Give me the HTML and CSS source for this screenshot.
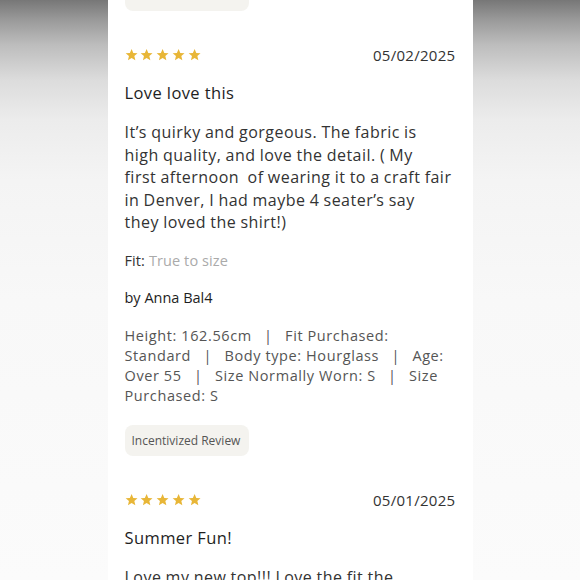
FILE: index.html
```html
<!DOCTYPE html>
<html lang="en">
<head>
<meta charset="utf-8">
<link rel="stylesheet" href="styles.css">
</head>
<body>
<main class="card">
  <div class="tag">Incentivized Review</div>

  <article class="review">
    <div class="review-head">
      <div class="stars" aria-label="5 stars">
        <svg viewBox="0 0 24 24"><path d="M12 1.8l3.1 7.1 7.7.7-5.8 5.1 1.8 7.5L12 18.3l-6.6 3.9 1.8-7.5L1.2 9.6l7.7-.7z"/></svg>
        <svg viewBox="0 0 24 24"><path d="M12 1.8l3.1 7.1 7.7.7-5.8 5.1 1.8 7.5L12 18.3l-6.6 3.9 1.8-7.5L1.2 9.6l7.7-.7z"/></svg>
        <svg viewBox="0 0 24 24"><path d="M12 1.8l3.1 7.1 7.7.7-5.8 5.1 1.8 7.5L12 18.3l-6.6 3.9 1.8-7.5L1.2 9.6l7.7-.7z"/></svg>
        <svg viewBox="0 0 24 24"><path d="M12 1.8l3.1 7.1 7.7.7-5.8 5.1 1.8 7.5L12 18.3l-6.6 3.9 1.8-7.5L1.2 9.6l7.7-.7z"/></svg>
        <svg viewBox="0 0 24 24"><path d="M12 1.8l3.1 7.1 7.7.7-5.8 5.1 1.8 7.5L12 18.3l-6.6 3.9 1.8-7.5L1.2 9.6l7.7-.7z"/></svg>
      </div>
      <span class="date">05/02/2025</span>
    </div>
    <h3 class="title">Love love this</h3>
    <p class="body">It’s quirky and gorgeous. The fabric is<br>high quality, and love the detail. ( My<br>first afternoon&nbsp; of wearing it to a craft fair<br>in Denver, I had maybe 4 seater’s say<br>they loved the shirt!)</p>
    <p class="fit"><span class="fit-label">Fit:</span> <span class="fit-value">True to size</span></p>
    <p class="author">by Anna Bal4</p>
    <p class="meta">Height: 162.56cm <span class="sep">|</span> Fit Purchased: Standard <span class="sep">|</span> Body type: Hourglass <span class="sep">|</span> Age: Over 55 <span class="sep">|</span> Size Normally Worn: S <span class="sep">|</span> Size Purchased: S</p>
    <div class="tag">Incentivized Review</div>
  </article>

  <article class="review">
    <div class="review-head">
      <div class="stars" aria-label="5 stars">
        <svg viewBox="0 0 24 24"><path d="M12 1.8l3.1 7.1 7.7.7-5.8 5.1 1.8 7.5L12 18.3l-6.6 3.9 1.8-7.5L1.2 9.6l7.7-.7z"/></svg>
        <svg viewBox="0 0 24 24"><path d="M12 1.8l3.1 7.1 7.7.7-5.8 5.1 1.8 7.5L12 18.3l-6.6 3.9 1.8-7.5L1.2 9.6l7.7-.7z"/></svg>
        <svg viewBox="0 0 24 24"><path d="M12 1.8l3.1 7.1 7.7.7-5.8 5.1 1.8 7.5L12 18.3l-6.6 3.9 1.8-7.5L1.2 9.6l7.7-.7z"/></svg>
        <svg viewBox="0 0 24 24"><path d="M12 1.8l3.1 7.1 7.7.7-5.8 5.1 1.8 7.5L12 18.3l-6.6 3.9 1.8-7.5L1.2 9.6l7.7-.7z"/></svg>
        <svg viewBox="0 0 24 24"><path d="M12 1.8l3.1 7.1 7.7.7-5.8 5.1 1.8 7.5L12 18.3l-6.6 3.9 1.8-7.5L1.2 9.6l7.7-.7z"/></svg>
      </div>
      <span class="date">05/01/2025</span>
    </div>
    <h3 class="title">Summer Fun!</h3>
    <p class="body">Love my new top!!! Love the fit the flowiness and the colors. So fun to wear all summer.</p>
  </article>
</main>
</body>
</html>
```

FILE: styles.css
```css
html, body {
  margin: 0;
  padding: 0;
}

body {
  height: 580px;
  overflow: hidden;
  font-family: "Open Sans", Lato, sans-serif;
  background: linear-gradient(to bottom, #777777 0px, #9a9a9a 20px, #bdbdbd 45px, #dcdcdc 80px, #ececec 120px, #f4f4f4 180px, #f8f8f8 300px, #fbfbfb 580px);
}

.card {
  width: 331px;
  height: 600px;
  margin: -20px auto 0;
  padding: 0 17px;
  background: #ffffff;
  overflow: hidden;
}

.tag {
  display: inline-flex;
  align-items: center;
  height: 31px;
  padding: 0 7px;
  width: 110px;
  border-radius: 8px;
  background: #f4f3ef;
  color: #555555;
  font-size: 12px;
}

.review {
  display: flex;
  flex-direction: column;
  align-items: flex-start;
  padding-top: 34px;
}

.review-head {
  align-self: stretch;
  display: flex;
  justify-content: space-between;
  align-items: center;
  height: 20px;
}

.stars {
  display: flex;
  gap: 2.6px;
}

.stars svg {
  width: 13.2px;
  height: 13.2px;
  fill: #e8b637;
}

.date {
  font-size: 15px;
  color: #333333;
  letter-spacing: 0.3px;
}

.title {
  margin: 17px 0 0;
  font-size: 16.5px;
  font-weight: 400;
  line-height: 22px;
  color: #1e1e1e;
  letter-spacing: 0.4px;
}

.body {
  margin: 17px 0 0;
  font-size: 16px;
  line-height: 22.5px;
  color: #333333;
  letter-spacing: 0.48px;
  word-spacing: -0.4px;
}

.fit {
  margin: 17px 0 0;
  font-size: 14.5px;
  line-height: 20px;
  letter-spacing: 0.1px;
}

.fit-label {
  color: #333333;
}

.fit-value {
  color: #aaaaaa;
}

.author {
  margin: 17px 0 0;
  font-size: 14.5px;
  line-height: 20px;
  color: #1e1e1e;
}

.meta {
  margin: 18px 0 0;
  font-size: 14.5px;
  line-height: 20px;
  color: #555555;
  letter-spacing: 0.6px;
}

.sep {
  margin: 0 8px;
}

.review .tag {
  margin-top: 19px;
}
```
